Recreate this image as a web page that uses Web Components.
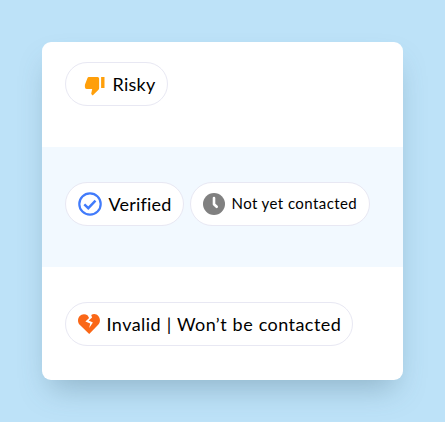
<!DOCTYPE html>
<html lang="en">
<head>
<meta charset="UTF-8">
<title>Contact status</title>
<style>
    body {
        margin: 0;
        padding: 42px;
        background: #bde2f8;
        font-family: Lato, "Liberation Sans", sans-serif;
        color: #000;
    }
</style>
</head>
<body>
<status-card>
    <status-row style="--height: 105px; --top: 20px">
        <status-chip icon="risky" style="--width: 103px; --gap: 7.5px; --spacing: 0.25px">Risky</status-chip>
    </status-row>
    <status-row tinted style="--height: 120px; --top: 35px">
        <status-chip icon="verified" style="--width: 119px; --gap: 6.5px; --spacing: 0.2px">Verified</status-chip>
        <status-chip icon="pending" style="--width: 180px; --gap: 6.5px; --size: 15px; --spacing: 0.42px">Not yet contacted</status-chip>
    </status-row>
    <status-row style="--height: 113px; --top: 35px">
        <status-chip icon="invalid" style="--width: 288px; --gap: 6.5px; --spacing: 0.45px; --words: 0.5px">Invalid | Won’t be contacted</status-chip>
    </status-row>
</status-card>

<script>
// Icon markup, keyed by the chip's icon attribute
const ICONS = {
    risky: `<svg width="27" height="20" viewBox="0 0 27 20" fill="#ff9f0a">
        <path d="M10.8 1H19.6Q21.1 1 21.1 2.5V12.2Q21.1 13 20.5 13.7L14.7 19.4L13.5 18.3Q13.1 17.8 13.3 17.2L14.2 13H8.7Q6.9 13 6.9 11.1V9.2Q6.9 8.7 7.1 8.3L9.5 2Q9.9 1 10.8 1Z"/>
        <path d="M23.1 1H26.5V12H23.1Z"/>
    </svg>`,
    verified: `<svg width="24" height="24" viewBox="0 0 24 24" fill="none" stroke="#417bfb">
        <circle cx="12" cy="12" r="10.7" stroke-width="2.2"/>
        <path d="M6.3 12.3L10.3 16.2L17.5 8.7" stroke-width="2.4"/>
    </svg>`,
    pending: `<svg width="22" height="22" viewBox="0 0 22 22">
        <circle cx="11" cy="11" r="11" fill="#808080"/>
        <path d="M11 5V11.2L13.7 13.8" fill="none" stroke="#fff" stroke-width="2.6" stroke-linecap="round" stroke-linejoin="round"/>
    </svg>`,
    invalid: `<svg width="22" height="20" viewBox="0 0 22 20" fill="#fa6717">
        <path d="M11.2 20L1.7 10.8C-.5 8.5-.5 4.6 1.5 2.2C3.6-.2 7.1-.5 9.7 1.4L11.1 4L7.4 7.5L12.2 9.6L11.2 14L14.9 8.5L10.7 6.4L14.1 3.4L13.2 1C15.7-.6 18.7-.1 20.5 2.2C22.5 4.6 22.4 8.5 20.2 10.8Z"/>
    </svg>`
};

class StatusCard extends HTMLElement {
    connectedCallback() {
        this.attachShadow({ mode: 'open' });
        this.shadowRoot.innerHTML = `
            <style>
                :host {
                    display: block;
                    width: 361px;
                    border-radius: 9px;
                    background: #fff;
                    box-shadow: 0 16px 30px -8px rgba(60, 95, 115, 0.34);
                }
            </style>
            <slot></slot>
        `;
    }
}

class StatusRow extends HTMLElement {
    connectedCallback() {
        this.attachShadow({ mode: 'open' });
        this.shadowRoot.innerHTML = `
            <style>
                :host {
                    display: flex;
                    align-items: flex-start;
                    gap: 6px;
                    box-sizing: border-box;
                    height: var(--height);
                    padding: var(--top) 23px 0;
                }

                :host([tinted]) {
                    background: #f2f9ff;
                }
            </style>
            <slot></slot>
        `;
    }
}

class StatusChip extends HTMLElement {
    connectedCallback() {
        this.attachShadow({ mode: 'open' });
        this.shadowRoot.innerHTML = `
            <style>
                :host {
                    display: flex;
                    align-items: center;
                    gap: var(--gap);
                    box-sizing: border-box;
                    flex: none;
                    width: var(--width);
                    height: 44px;
                    padding: 0 12px;
                    border: 1px solid #e8e8f3;
                    border-radius: 22px;
                    background: #fff;
                    font-size: var(--size, 18px);
                    letter-spacing: var(--spacing, 0);
                    word-spacing: var(--words, 0);
                    line-height: 24px;
                    white-space: nowrap;
                }

                svg {
                    display: block;
                    flex: none;
                }

                .label {
                    padding-bottom: 1px;
                }

                :host([icon="pending"]) svg,
                :host([icon="pending"]) .label {
                    margin-bottom: 1px;
                }

                :host([icon="risky"]) svg {
                    margin-top: 4px;
                }
            </style>
            ${ICONS[this.getAttribute('icon')]}
            <span class="label"><slot></slot></span>
        `;
    }
}

customElements.define('status-card', StatusCard);
customElements.define('status-row', StatusRow);
customElements.define('status-chip', StatusChip);
</script>
</body>
</html>
